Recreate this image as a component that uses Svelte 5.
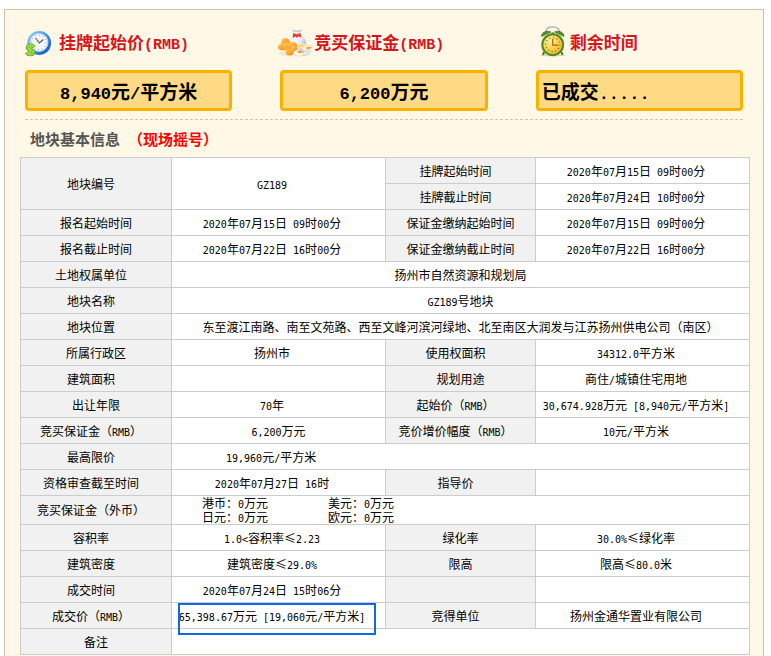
<script>
  // label(): grey heading cell, value(): white data cell
  const label = (text, opts = {}) => ({ head: true, text, ...opts });
  const value = (text, opts = {}) => ({ text, ...opts });

  const summary = [
    { icon: 'clock', title: '挂牌起始价(RMB)', text: '8,940元/平方米' }
    ,{ icon: 'bag', title: '竞买保证金(RMB)', text: '6,200万元' }
    ,{ icon: 'alarm', title: '剩余时间', text: '已成交.....', start: true }
  ];

  const currencies = ['港币：0万元', '美元：0万元', '日元：0万元', '欧元：0万元'];

  const rows = [
    [label('地块编号', { rows: 2 }), value('GZ189', { rows: 2 }), label('挂牌起始时间'), value('2020年07月15日 09时00分')]
    ,[label('挂牌截止时间'), value('2020年07月24日 10时00分')]
    ,[label('报名起始时间', { mid: true }), value('2020年07月15日 09时00分'), label('保证金缴纳起始时间', { mid: true }), value('2020年07月15日 09时00分')]
    ,[label('报名截止时间', { mid: true }), value('2020年07月22日 16时00分'), label('保证金缴纳截止时间', { mid: true }), value('2020年07月22日 16时00分')]
    ,[label('土地权属单位'), value('扬州市自然资源和规划局', { cols: 3, mid: true })]
    ,[label('地块名称'), value('GZ189号地块', { cols: 3, mid: true })]
    ,[label('地块位置'), value('东至渡江南路、南至文苑路、西至文峰河滨河绿地、北至南区大润发与江苏扬州供电公司（南区）', { cols: 3, mid: true })]
    ,[label('所属行政区', { mid: true }), value('扬州市'), label('使用权面积'), value('34312.0平方米')]
    ,[label('建筑面积'), value(''), label('规划用途', { mid: true }), value('商住/城镇住宅用地')]
    ,[label('出让年限', { mid: true }), value('70年'), label('起始价（RMB）'), value('30,674.928万元 [8,940元/平方米]')]
    ,[label('竞买保证金（RMB）'), value('6,200万元', { mid: true }), label('竞价增价幅度（RMB）'), value('10元/平方米')]
    ,[label('最高限价'), value('19,960元/平方米', { cols: 3, start: true })]
    ,[label('资格审查截至时间'), value('2020年07月27日 16时'), label('指导价'), value('')]
    ,[label('竞买保证金（外币）'), value('', { cols: 3, start: true, list: currencies })]
    ,[label('容积率'), value('1.0<容积率≤2.23'), label('绿化率', { mid: true }), value('30.0%≤绿化率')]
    ,[label('建筑密度'), value('建筑密度≤29.0%'), label('限高', { mid: true }), value('限高≤80.0米')]
    ,[label('成交时间'), value('2020年07月24日 15时06分'), label(''), value('')]
    ,[label('成交价（RMB）'), value('65,398.67万元 [19,060元/平方米]', { marked: true }), label('竞得单位'), value('扬州金通华置业有限公司')]
    ,[label('备注', { mid: true }), value('', { cols: 3 })]
  ];

  // Latin runs are set in a half-width face beside the Chinese
  function runs(text) {
    return text.split(/([\x20-\x7e]+)/).filter(Boolean);
  } //end runs()

  const isLatin = (run) => /^[\x20-\x7e]/.test(run);
</script>

{#snippet mixed(text)}{#each runs(text) as run}{#if isLatin(run)}<span class="latin">{run}</span>{:else}{run}{/if}{/each}{/snippet}

{#snippet icon(name)}
  <svg class="icon" viewBox="0 0 34 32" aria-hidden="true">
    {#if name === 'clock'}
      <defs>
        <linearGradient id="rim" x1="0" y1="0" x2="1" y2="1">
          <stop offset="0" stop-color="#9fd4fa" />
          <stop offset=".5" stop-color="#3a93ea" />
          <stop offset="1" stop-color="#0b4fc4" />
        </linearGradient>
      </defs>
      <circle cx="14.2" cy="17" r="11.9" fill="url(#rim)" />
      <circle cx="14" cy="16.5" r="9" fill="#f4f6f8" stroke="#c2d6e8" stroke-width=".8" />
      <circle cx="14" cy="16.5" r="7.3" fill="none" stroke="#777" stroke-width="1" stroke-dasharray=".8 3.02" />
      <path d="M10.5 12 14.3 17 18.3 13.500" fill="none" stroke="#555" stroke-width="1.1" />
      <path d="M9.2 21.2C7.8 18.8 2.6 18.8 2.6 21.7c0 3 6 2 6 4.6 0 2.8-5.6 2.6-7 .1M6 17.5 4.7 29.6" fill="none" stroke="#539f20" stroke-width="3.6" />
      <path d="M9.2 21.2C7.8 18.8 2.6 18.8 2.6 21.7c0 3 6 2 6 4.6 0 2.8-5.6 2.6-7 .1M6 17.5 4.7 29.6" fill="none" stroke="#9bd744" stroke-width="2.2" />
    {:else if name === 'bag'}
      <defs>
        <radialGradient id="cloth" cx=".35" cy=".4" r=".7">
          <stop offset="0" stop-color="#fff" />
          <stop offset=".6" stop-color="#e4e5ec" />
          <stop offset="1" stop-color="#adafbd" />
        </radialGradient>
        <linearGradient id="gold" x1="0" y1="0" x2="1" y2="1">
          <stop offset="0" stop-color="#ffd36d" />
          <stop offset=".5" stop-color="#f8a831" />
          <stop offset="1" stop-color="#e9861a" />
        </linearGradient>
      </defs>
      <ellipse cx="15" cy="27.500" rx="16" ry="2.800" fill="#eee8dc" />
      <path d="M12 4.2q2.5-1.5 5-.2 2.500-1.300 5 .2l-2 4.200c4 2 6.500 6.200 6.200 10.500-.2 4-4 6-9 6s-8-3-7.800-7c.2-4 2-7.300 5-9.500z" fill="url(#cloth)" />
      <path d="M12.500 4.500q4.500 2 9 0" fill="none" stroke="#aab0c0" stroke-width=".8" />
      <path d="m13.200 7 3.500 1.300L20.500 7l.8 4.500-3-1-1.300 1.500-1.500-1.500-2.900 1.400z" fill="#e0432d" />
      <g fill="url(#gold)">
        <circle cx="5.500" cy="16.300" r="4.400" />
        <ellipse cx="2.500" cy="21" rx="4.800" ry="3.600" />
        <ellipse cx="7.500" cy="20.500" rx="4.500" ry="4" />
        <ellipse cx="12.500" cy="19.500" rx="4.700" ry="3.500" />
        <ellipse cx="9.500" cy="26" rx="4" ry="3.600" />
        <ellipse cx="14" cy="23.500" rx="3" ry="4" />
      </g>
      <g stroke="#cfcac0" stroke-width=".5">
        <path d="m17.500 19.500 7-2 4 3-7 2.500z" fill="#fff8dc" />
        <path d="m23 21 5.500-2 4.500 1.500-4.500 4.500-6-1.500z" fill="#fffdf4" />
        <path d="m13.500 26 5-3 6.500 2-1 4-5 1.300-5.500-2z" fill="#fffdf4" />
        <path d="m23 25 4-1 4 1.500-3 3.500-5 .5z" fill="#e8e8ea" />
      </g>
      <path d="m18 20 5-1.500 2.500 1.200-5 1.800z" fill="#ffd53d" />
      <path d="m25 22 4-1.500 3 .7-3.500 2.300zM16.500 26l3.500-1.700 4 1.200-3.500 2z" fill="#f39a33" />
    {:else}
      <defs>
        <radialGradient id="dial" cx=".35" cy=".3" r=".8">
          <stop offset="0" stop-color="#fff1a0" />
          <stop offset=".6" stop-color="#ffc83b" />
          <stop offset="1" stop-color="#ef9c1c" />
        </radialGradient>
      </defs>
      <ellipse cx="16.500" cy="29.300" rx="13" ry="1" fill="#ddd6c4" />
      <path d="M10 6.500C10 2 12.500.8 16.800.8S23.500 2.500 23.500 6.500" fill="none" stroke="#a9adae" stroke-width="1.300" />
      <path d="m8 26-1 3M25.500 26l1 3" stroke="#467817" stroke-width="2" />
      <g fill="#5a9126" stroke="#2e5e18" stroke-width=".6">
        <path d="M5.500 10.500c0-4 4.500-6.500 9.500-4.500z" />
        <path d="M28 10.500c0-4-4.500-6.500-9.500-4.500z" />
      </g>
      <path d="M15.500 6.500h2.500v3h-2.500z" fill="#466f22" />
      <circle cx="16.700" cy="18.700" r="10.300" fill="url(#dial)" stroke="#568a1a" stroke-width="2.300" />
      <circle cx="16.700" cy="18.700" r="8.900" fill="none" stroke="#dbe486" stroke-width=".6" />
      <circle cx="16.700" cy="18.700" r="7" fill="none" stroke="#805f18" stroke-width="1.200" stroke-dasharray="1 2.665" />
      <path d="M16.700 13v6.200H22" fill="none" stroke="#8d6b27" stroke-width="1.200" />
    {/if}
  </svg>
{/snippet}

<main class="panel">
  <section class="summary">
    {#each summary as item}
      <div>
        <h2 class="caption">{@render icon(item.icon)}<span>{@render mixed(item.title)}</span></h2>
        <p class="amount" class:start={item.start}>{@render mixed(item.text)}</p>
      </div>
    {/each}
  </section>

  <h1 class="title"><span>地块基本信息</span><span class="note">（现场摇号）</span></h1>

  <table>
    <colgroup>
      <col class="name-a"><col><col class="name-b"><col>
    </colgroup>
    <tbody>
      {#each rows as cells}
        <tr class:tall={cells.some((cell) => cell.list)}>
          {#each cells as cell}
            {#if cell.head}
              <th scope="row" rowspan={cell.rows} class:mid={cell.mid}>{@render mixed(cell.text)}</th>
            {:else}
              <td
                rowspan={cell.rows}
                colspan={cell.cols}
                class:mid={cell.mid}
                class:start={cell.start}
                class:marked={cell.marked}
                class:listed={cell.list}
              >
                {#if cell.list}
                  <div class="currencies">
                    {#each cell.list as entry}
                      <span>{@render mixed(entry)}</span>
                    {/each}
                  </div>
                {:else}
                  {@render mixed(cell.text)}
                {/if}
              </td>
            {/if}
          {/each}
        </tr>
      {/each}
    </tbody>
  </table>
</main>

<style>
  :global(body) {
    margin: 0;
    background: #fff;
  }

  .panel {
    margin: 9px 7px 0 4px;
    padding: 16px 13px 8px 15px;
    border: 1px solid #cfc4a6;
    border-bottom: 0;
    background: #fff8e6;
    color: #000;
    font-family: "Noto Sans CJK SC", sans-serif;
    font-size: 12px;
    line-height: 14px;
    text-spacing-trim: space-all;
  }

  /* no line height of its own, so mixed lines stay as tall as the Chinese */
  .latin {
    font-family: "DejaVu Sans Mono", monospace;
    font-size: 10px;
    line-height: 0;
    white-space: pre;
  }

  .summary {
    display: grid;
    grid-template-columns: repeat(3, 1fr);
    gap: 48px;
    margin: 0 7px 0 5px;
    padding-bottom: 8px;
    border-bottom: 1px dashed #c9c5b4;
  }

  .caption {
    display: flex;
    align-items: center;
    height: 32px;
    margin: 0 0 12px;
    color: #d9141b;
    font-size: 17px;
    line-height: 24px;
    white-space: nowrap;
  }

  .caption .latin {
    font-family: "Liberation Mono", monospace;
    font-size: 15px;
  }

  .icon {
    flex: none;
    width: 34px;
    height: 32px;
    overflow: visible;
  }

  .amount {
    margin: 0;
    padding: 0 3px;
    border: 3px solid #fbb100;
    border-radius: 4px;
    background: #ffda85;
    font-size: 19px;
    font-weight: bold;
    line-height: 35px;
    text-align: center;
    white-space: nowrap;
  }

  .amount.start {
    text-align: left;
  }

  .amount .latin {
    font-family: "Liberation Mono", monospace;
    font-size: 17px;
  }

  .title {
    display: flex;
    gap: 8px;
    margin: 0;
    padding-left: 10px;
    color: #555;
    font-size: 15px;
    line-height: 37px;
  }

  .note {
    color: #f00;
  }

  table {
    width: 100%;
    border-collapse: collapse;
    table-layout: fixed;
    background: #fff;
  }

  .name-a {
    width: 151px;
  }

  .name-b {
    width: 150px;
  }

  tr {
    height: 26px;
  }

  .tall {
    height: 29px;
  }

  th,
  td {
    padding: 0;
    border: 1px solid #ccc;
    font-weight: normal;
    text-align: center;
    vertical-align: middle;
  }

  th {
    padding-right: 10px;
    background: #f1f1f1;
  }

  td {
    padding-right: 13px;
  }

  th.mid,
  td.mid {
    padding-right: 0;
  }

  td.start {
    padding-left: 54px;
    text-align: left;
  }

  td.listed {
    padding-left: 30px;
  }

  .currencies {
    display: grid;
    grid-template-columns: 126px 1fr;
  }

  .marked {
    position: relative;
    white-space: nowrap;
  }

  /* highlight frame drawn over the final price */
  .marked::after {
    content: "";
    position: absolute;
    z-index: 1;
    top: 0;
    right: 9px;
    left: 6px;
    height: 28px;
    border: 2px solid #1268e0;
  }
</style>
